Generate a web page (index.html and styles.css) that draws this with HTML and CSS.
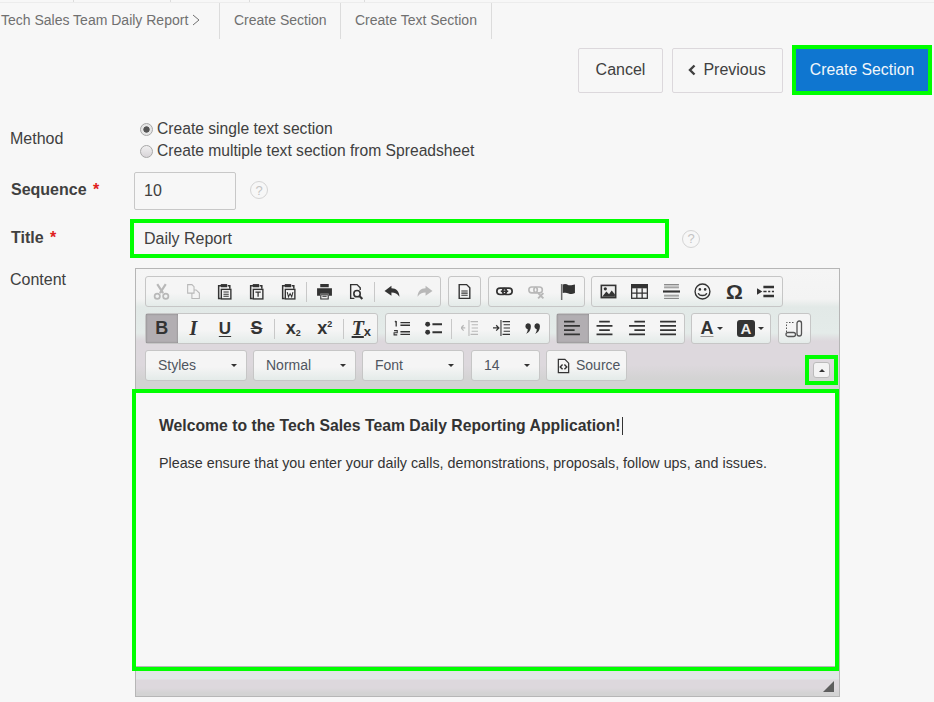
FILE: index.html
```html
<!DOCTYPE html>
<html lang="en">
<head>
<meta charset="utf-8">
<title>Create Text Section</title>
<link rel="stylesheet" href="styles.css">
</head>
<body>
<svg class="sprite" xmlns="http://www.w3.org/2000/svg">
  <symbol id="i-cut" viewBox="0 0 16 16"><path d="M4 1l5.500 8.500M12 1L6.500 9.500" fill="none" stroke="currentColor" stroke-width="2"/><circle cx="4" cy="12.500" r="2.500" fill="none" stroke="currentColor" stroke-width="1.600"/><circle cx="12" cy="12.500" r="2.500" fill="none" stroke="currentColor" stroke-width="1.600"/></symbol>
  <symbol id="i-copy" viewBox="0 0 16 16"><path d="M2.500 1.500h4l2 2v6h-6zM8 6.500h2.500l3 3v5h-7v-5" fill="#f4f4f4" stroke="currentColor"/></symbol>
  <symbol id="i-paste" viewBox="0 0 16 16"><path d="M5 2.500H2.500v12h2" fill="none" stroke="currentColor" stroke-width="1.400"/><path d="M11 2.500h2v3" fill="none" stroke="currentColor" stroke-width="1.400"/><path d="M4.500 1h6v3h-6z" fill="currentColor"/><rect x="5" y="6" width="9" height="9" fill="none" stroke="currentColor" stroke-width="1.300"/><path d="M7 8.500h5M7 10.500h5M7 12.500h5" stroke="currentColor"/></symbol>
  <symbol id="i-pastet" viewBox="0 0 16 16"><path d="M5 2.500H2.500v12h2" fill="none" stroke="currentColor" stroke-width="1.400"/><path d="M11 2.500h2v3" fill="none" stroke="currentColor" stroke-width="1.400"/><path d="M4.500 1h6v3h-6z" fill="currentColor"/><rect x="5" y="6" width="9" height="9" fill="none" stroke="currentColor" stroke-width="1.300"/><path d="M7 8.500h5M9.500 8.500v4.500" stroke="currentColor" stroke-width="1.200"/></symbol>
  <symbol id="i-pastew" viewBox="0 0 16 16"><path d="M5 2.500H2.500v12h2" fill="none" stroke="currentColor" stroke-width="1.400"/><path d="M11 2.500h2v3" fill="none" stroke="currentColor" stroke-width="1.400"/><path d="M4.500 1h6v3h-6z" fill="currentColor"/><rect x="5" y="6" width="9" height="9" fill="none" stroke="currentColor" stroke-width="1.300"/><path d="M6.800 8.500l1.200 4.500 1.500-3 1.500 3 1.200-4.500" fill="none" stroke="currentColor"/></symbol>
  <symbol id="i-print" viewBox="0 0 16 16"><path d="M4 1h8v3H4zM1 5h14v7h-3v-2H4v2H1z" fill="currentColor"/><path d="M4.500 11h7v4h-7z" fill="#eee" stroke="currentColor"/><path d="M6 12.500h4" stroke="currentColor"/></symbol>
  <symbol id="i-preview" viewBox="0 0 16 16"><path d="M6 14.500H2.500v-13h6l3 3v2" fill="none" stroke="currentColor" stroke-width="1.300"/><circle cx="8.500" cy="10" r="3" fill="none" stroke="currentColor" stroke-width="1.500"/><path d="M10.500 12l3 3" stroke="currentColor" stroke-width="2"/></symbol>
  <symbol id="i-undo" viewBox="0 0 16 16"><path d="M7 2.500L0.500 7.500 7 12V9c3.500 0 5.500 1 7.500 4 0-5-3-8-7.500-8z" fill="currentColor"/></symbol>
  <symbol id="i-redo" viewBox="0 0 16 16"><path d="M9 2.500l6.500 5L9 12V9c-3.500 0-5.500 1-7.500 4 0-5 3-8 7.500-8z" fill="currentColor"/></symbol>
  <symbol id="i-doc" viewBox="0 0 16 16"><path d="M3 1.500h7l3 3v10H3z" fill="none" stroke="currentColor" stroke-width="1.300"/><path d="M5 7.500h6M5 9.500h6M5 11.500h6" stroke="currentColor"/></symbol>
  <symbol id="i-link" viewBox="0 0 16 16"><rect x="0.800" y="4.800" width="9" height="6" rx="3" fill="none" stroke="currentColor" stroke-width="1.600"/><rect x="6.200" y="4.800" width="9" height="6" rx="3" fill="none" stroke="currentColor" stroke-width="1.600"/><path d="M4.500 7.800h7" stroke="currentColor" stroke-width="1.500"/></symbol>
  <symbol id="i-unlink" viewBox="0 0 16 16"><rect x="0.800" y="3.800" width="8" height="5.500" rx="2.700" fill="none" stroke="currentColor" stroke-width="1.500"/><rect x="5.500" y="3.800" width="8" height="5.500" rx="2.700" fill="none" stroke="currentColor" stroke-width="1.500"/><path d="M9.500 9.500l5 5M14.500 9.500l-5 5" stroke="currentColor" stroke-width="1.800"/></symbol>
  <symbol id="i-flag" viewBox="0 0 16 16"><path d="M2.500 1v15" stroke="currentColor" stroke-width="1.400" opacity=".7"/><path d="M3.500 1.500c2-1 3.500-.5 5.500.5 2 .5 3.500 0 6-.5v8c-2.500 1-4 1-6 .3-2-.8-3.500-.8-5.500-.3z" fill="currentColor"/></symbol>
  <symbol id="i-image" viewBox="0 0 16 16"><rect x="0.500" y="1.500" width="15" height="13" fill="currentColor"/><rect x="2" y="3" width="12" height="10" fill="#eee"/><circle cx="5" cy="5.500" r="1.500" fill="currentColor"/><path d="M2 13l4-5 2.500 2.500L11 7l3 3.500V13z" fill="currentColor"/></symbol>
  <symbol id="i-table" viewBox="0 0 16 16"><path d="M0 1h16v4H0z" fill="currentColor"/><rect x="0.600" y="1.600" width="14.800" height="12.800" fill="none" stroke="currentColor" stroke-width="1.200"/><path d="M5.500 5v9M10.500 5v9M1 9.500h14" stroke="currentColor" stroke-width="1.200"/></symbol>
  <symbol id="i-hr" viewBox="0 0 16 16"><path d="M0 7h16v2H0z" fill="currentColor"/><path d="M1 1.500h14M1 4.500h14M1 11.500h14M1 14.500h14" stroke="currentColor" opacity=".55"/><path d="M1 3h14M1 13h14" stroke="currentColor" opacity=".35"/></symbol>
  <symbol id="i-smile" viewBox="0 0 16 16"><circle cx="8" cy="8" r="7" fill="none" stroke="currentColor" stroke-width="1.300"/><circle cx="5.500" cy="6" r="1.200" fill="currentColor"/><circle cx="10.500" cy="6" r="1.200" fill="currentColor"/><path d="M4 9.500c1 3 7 3 8 0" fill="none" stroke="currentColor" stroke-width="1.300"/></symbol>
  <symbol id="i-break" viewBox="0 0 16 16"><path d="M0 5l5 3-5 3z" fill="currentColor"/><path d="M6 2.500h10V5H6zM6 11h10v2.500H6z" fill="currentColor"/><path d="M6 8h3M10.500 8h2M14 8h2" stroke="currentColor" stroke-width="1.300"/></symbol>
  <symbol id="i-ol" viewBox="0 0 16 16"><path d="M7 2.500h9M7 5h9M7 11h9M7 13.500h9" stroke="currentColor" stroke-width="1.300" fill="none"/><path d="M3 1v5M1.800 2L3 1" stroke="currentColor" stroke-width="1.200" fill="none"/><path d="M1 10h3v2H1v2h3" stroke="currentColor" fill="none"/></symbol>
  <symbol id="i-ul" viewBox="0 0 16 16"><circle cx="2.500" cy="4" r="2.300" fill="currentColor"/><circle cx="2.500" cy="11.500" r="2.300" fill="currentColor"/><path d="M7 4h9M7 11.500h9" stroke="currentColor" stroke-width="1.800"/></symbol>
  <symbol id="i-outdent" viewBox="0 0 16 16"><path d="M9 1.500h7M10 4.500h6M10 7.500h6M10 10.500h6M9 13.500h7M7.500 0v15" stroke="currentColor" fill="none"/><path d="M0 7.500h4M2.500 5l-2.500 2.500 2.500 2.500" stroke="currentColor" stroke-width="1.200" fill="none"/></symbol>
  <symbol id="i-indent" viewBox="0 0 16 16"><path d="M9 1.500h7M10 4.500h6M10 7.500h6M10 10.500h6M9 13.500h7M7.500 0v15" stroke="currentColor" fill="none"/><path d="M0 7.500h5M3 5l2.500 2.500L3 10" stroke="currentColor" stroke-width="1.200" fill="none"/></symbol>
  <symbol id="i-quote" viewBox="0 0 16 16"><path d="M3.500 3A3 3 0 0 1 6.500 6c0 3.500-2 6-4.500 7 1-1.200 1.500-2.500 1.500-4.200A3 3 0 0 1 3.500 3zM12 3a3 3 0 0 1 3 3c0 3.500-2 6-4.500 7 1-1.200 1.500-2.500 1.500-4.200A3 3 0 0 1 12 3z" fill="currentColor"/></symbol>
  <symbol id="i-left" viewBox="0 0 16 16"><path d="M0 1.500h10M0 5.500h15M0 9.500h10M0 13.500h15" stroke="currentColor" stroke-width="1.800"/></symbol>
  <symbol id="i-center" viewBox="0 0 16 16"><path d="M3 1.500h10M0.500 5.500h15M3 9.500h10M0.500 13.500h15" stroke="currentColor" stroke-width="1.800"/></symbol>
  <symbol id="i-right" viewBox="0 0 16 16"><path d="M6 1.500h10M1 5.500h15M6 9.500h10M1 13.500h15" stroke="currentColor" stroke-width="1.800"/></symbol>
  <symbol id="i-justify" viewBox="0 0 16 16"><path d="M1 1.500h15M1 5.500h15M1 9.500h15M1 13.500h15" stroke="currentColor" stroke-width="1.800"/></symbol>
  <symbol id="i-blocks" viewBox="0 0 18 18"><path d="M1.500 12V2.500h8" fill="none" stroke="currentColor" stroke-dasharray="1.500 1.500"/><rect x="12" y="1" width="4.500" height="15" rx="2.200" fill="none" stroke="currentColor" stroke-width="1.300"/><rect x="1" y="12.500" width="9.500" height="4" rx="2" fill="none" stroke="currentColor" stroke-width="1.300"/></symbol>
  <symbol id="i-source" viewBox="0 0 16 16"><path d="M2.500 1h7l4 4v10h-11z" fill="none" stroke="currentColor" stroke-width="1.300"/><path d="M7 6.500L4.500 9 7 11.500M9 6.500L11.500 9 9 11.500" fill="none" stroke="currentColor" stroke-width="1.500"/></symbol>
</svg>

<div class="topstrip"><span class="ts ts-1"></span><span class="ts ts-2"></span><span class="ts ts-3"></span><span class="ts ts-4"></span></div>

<nav class="crumbs">
  <div class="crumb crumb-first">Tech Sales Team Daily Report <svg class="crumb-chev" viewBox="0 0 8 12"><path d="M1 1l6 5-6 5" fill="none" stroke="currentColor"/></svg></div>
  <div class="crumb">Create Section</div>
  <div class="crumb">Create Text Section</div>
</nav>

<div class="actions">
  <button class="btn">Cancel</button>
  <button class="btn btn-prev"><svg class="prev-chev" viewBox="0 0 8 12"><path d="M6.500 1.500L2 6l4.500 4.500" fill="none" stroke="currentColor" stroke-width="2.400"/></svg>Previous</button>
  <button class="btn btn-primary">Create Section</button>
</div>

<form class="form">
  <div class="row row-method">
    <div class="label">Method</div>
    <div class="radios">
      <div class="radio-line"><span class="radio radio-on"></span>Create single text section</div>
      <div class="radio-line"><span class="radio"></span>Create multiple text section from Spreadsheet</div>
    </div>
  </div>
  <div class="row row-seq">
    <div class="label label-req">Sequence <span class="req">*</span></div>
    <div class="input input-seq">10</div>
    <span class="help">?</span>
  </div>
  <div class="row row-title">
    <div class="label label-req">Title <span class="req">*</span></div>
    <div class="input input-title">Daily Report</div>
    <span class="help">?</span>
  </div>
  <div class="row row-content">
    <div class="label">Content</div>
    <div class="editor">
      <div class="toolbar">
        <div class="tb-row">
          <div class="grp">
            <span class="tb off"><svg><use href="#i-cut"/></svg></span>
            <span class="tb off"><svg><use href="#i-copy"/></svg></span>
            <span class="tb"><svg><use href="#i-paste"/></svg></span>
            <span class="tb"><svg><use href="#i-pastet"/></svg></span>
            <span class="tb"><svg><use href="#i-pastew"/></svg></span>
            <span class="sep"></span>
            <span class="tb"><svg><use href="#i-print"/></svg></span>
            <span class="tb"><svg><use href="#i-preview"/></svg></span>
            <span class="sep"></span>
            <span class="tb"><svg><use href="#i-undo"/></svg></span>
            <span class="tb off"><svg><use href="#i-redo"/></svg></span>
          </div>
          <div class="grp"><span class="tb"><svg><use href="#i-doc"/></svg></span></div>
          <div class="grp">
            <span class="tb"><svg><use href="#i-link"/></svg></span>
            <span class="tb off"><svg><use href="#i-unlink"/></svg></span>
            <span class="tb"><svg><use href="#i-flag"/></svg></span>
          </div>
          <div class="grp">
            <span class="tb"><svg><use href="#i-image"/></svg></span>
            <span class="tb"><svg><use href="#i-table"/></svg></span>
            <span class="tb"><svg><use href="#i-hr"/></svg></span>
            <span class="tb"><svg><use href="#i-smile"/></svg></span>
            <span class="tb glyph-omega">Ω</span>
            <span class="tb"><svg><use href="#i-break"/></svg></span>
          </div>
        </div>
        <div class="tb-row">
          <div class="grp">
            <span class="tb on glyph-b">B</span>
            <span class="tb glyph-i">I</span>
            <span class="tb glyph-u">U</span>
            <span class="tb glyph-s">S</span>
            <span class="sep"></span>
            <span class="tb glyph-x">x<span class="g-sub">2</span></span>
            <span class="tb glyph-x">x<span class="g-sup">2</span></span>
            <span class="sep"></span>
            <span class="tb glyph-tx"><span class="g-t">T</span><span class="g-xs">x</span></span>
          </div>
          <div class="grp">
            <span class="tb"><svg><use href="#i-ol"/></svg></span>
            <span class="tb"><svg><use href="#i-ul"/></svg></span>
            <span class="sep"></span>
            <span class="tb off"><svg><use href="#i-outdent"/></svg></span>
            <span class="tb"><svg><use href="#i-indent"/></svg></span>
            <span class="tb"><svg><use href="#i-quote"/></svg></span>
          </div>
          <div class="grp">
            <span class="tb on"><svg><use href="#i-left"/></svg></span>
            <span class="tb"><svg><use href="#i-center"/></svg></span>
            <span class="tb"><svg><use href="#i-right"/></svg></span>
            <span class="tb"><svg><use href="#i-justify"/></svg></span>
          </div>
          <div class="grp">
            <span class="tb tb-color"><span class="g-a">A</span><span class="caret"></span></span>
            <span class="tb tb-color"><span class="g-abg">A</span><span class="caret"></span></span>
          </div>
          <div class="grp"><span class="tb tb-blocks"><svg><use href="#i-blocks"/></svg></span></div>
        </div>
        <div class="tb-row tb-row-last">
          <div class="combo combo-styles">Styles<span class="caret"></span></div>
          <div class="combo combo-normal">Normal<span class="caret"></span></div>
          <div class="combo combo-font">Font<span class="caret"></span></div>
          <div class="combo combo-size">14<span class="caret"></span></div>
          <div class="grp btn-source"><svg><use href="#i-source"/></svg>Source</div>
          <div class="collapse-wrap"><span class="collapse"><span class="caret caret-up"></span></span></div>
        </div>
      </div>
      <div class="content">
        <p class="content-h">Welcome to the Tech Sales Team Daily Reporting Application!<span class="cursor"></span></p>
        <p class="content-p">Please ensure that you enter your daily calls, demonstrations, proposals, follow ups, and issues.</p>
      </div>
      <div class="resize-bar"><span class="grip"></span></div>
    </div>
  </div>
</form>
</body>
</html>
```
FILE: styles.css
```css
* { box-sizing: border-box; }
html, body { margin: 0; padding: 0; }
body {
  width: 934px;
  height: 702px;
  overflow: hidden;
  background: #f7f7f7;
  color: #404040;
  font-family: "Liberation Sans", Arial, sans-serif;
  font-size: 16px;
}
.sprite { display: none; }

/* remains of the header above */
.topstrip {
  display: flex;
  height: 3px;
  border-bottom: 1px solid #ececec;
}
.ts { display: block; height: 2px; border-right: 1px solid #dcdcdc; }
.ts-1 { width: 74px; }
.ts-2 { width: 97px; }
.ts-3 { width: 79px; }
.ts-4 { width: 115px; }

/* breadcrumbs */
.crumbs {
  display: flex;
  height: 36px;
  color: #707070;
  font-size: 14px;
}
.crumb {
  display: flex;
  align-items: center;
  padding: 0 14px;
  border-right: 1px solid #dcdcdc;
  white-space: nowrap;
  height: 36px;
  padding-bottom: 2px;
}
.crumb-first { padding-left: 1px; padding-right: 0; width: 220px; gap: 4px; }
.crumb:nth-child(2) { width: 121px; }
.crumb:nth-child(3) { width: 151px; }
.crumb-chev { width: 8px; height: 12px; }

/* actions */
.actions {
  display: flex;
  justify-content: flex-end;
  align-items: center;
  gap: 9px;
  height: 50px;
  margin-top: 6px;
  padding-right: 2px;
}
.btn {
  height: 45px;
  font: inherit;
  color: #404040;
  background: #f7f7f7;
  border: 1px solid #dcd8dc;
  border-radius: 2px;
  padding: 0;
  width: 85px;
}
.btn-prev {
  width: 111px;
  display: flex;
  align-items: center;
  justify-content: center;
  gap: 7px;
}
.prev-chev { width: 8px; height: 12px; margin-left: -1px; }
.btn-primary {
  width: 140px;
  height: 50px;
  font-size: 15.800px;
  background: #0f76d0;
  color: #f2f7fb;
  border: 4px solid #00ff00;
  border-radius: 0;
}

/* form */
.form { display: block; }
.row { display: flex; }
.label { width: 134px; padding-left: 10px; flex: none; }
.label-req { padding-left: 11px; font-weight: 700; }
.req { color: #e02020; font-weight: 700; margin-left: 2px; }
.row-method { margin-top: 24px; height: 44px; }
.row-method .label { padding-top: 11px; }
.radios { padding-left: 6px; margin-top: -1px; font-size: 15.650px; }
.radio-line { display: flex; align-items: center; height: 22px; gap: 4px; }
.radio {
  width: 13px;
  height: 13px;
  border-radius: 50%;
  border: 1px solid #a8a8a8;
  background: linear-gradient(#f0f0f0, #d8d4d8);
}
.radio-on { background: radial-gradient(circle, #555 0 2.800px, #e6e6e6 3.500px); }

.input {
  display: flex;
  align-items: center;
  color: #404040;
}
.row-seq { margin-top: 9px; height: 38px; align-items: center; }
.row-seq .label { padding-bottom: 2px; }
.input-seq {
  width: 102px;
  height: 38px;
  border: 1px solid #c8c8c8;
  border-radius: 2px;
  padding-left: 9px;
}
.help {
  width: 18px;
  height: 18px;
  border-radius: 50%;
  border: 1px solid #d4d4d4;
  color: #c4c4c4;
  font-size: 13px;
  display: flex;
  align-items: center;
  justify-content: center;
  margin-left: 14px;
}
.row-seq .help { margin-bottom: 2px; }
.row-title { margin-top: 9px; height: 39px; align-items: center; }
.row-title .label { width: 130px; padding-bottom: 1px; }
.row-title .help { margin-left: 13px; }
.input-title {
  width: 539px;
  height: 39px;
  border: 4px solid #00ff00;
  padding-left: 10px;
}
.row-content { margin-top: 10px; }
.row-content .label { padding-top: 3px; width: 135px; }

/* editor */
.editor {
  width: 705px;
  height: 429px;
  border: 1px solid #b6b6b6;
  display: flex;
  flex-direction: column;
  position: relative;
}
.toolbar {
  height: 120px;
  padding: 7px 0 0 9px;
  background: linear-gradient(#f5f5f5 0, #f3f3f3 30px, #e2e9e7 38px, #e4ebe9 64px, #ddd8dd 72px, #ddd8dd 96px, #d3d3d3 110px);
}
.tb-row { display: flex; gap: 6.500px; height: 31px; margin-bottom: 6px; }
.tb-row-last { gap: 6px; align-items: stretch; position: relative; }
.grp {
  display: flex;
  align-items: center;
  height: 31px;
  border: 1px solid #c6c6c6;
  border-radius: 3px;
  background: linear-gradient(#f5f5f5 55%, #e4ebe9);
}
.tb {
  width: 31.600px;
  height: 29px;
  display: flex;
  align-items: center;
  justify-content: center;
  color: #333;
  flex: none;
}
.tb svg { width: 17px; height: 17px; }
.tb.off { color: #b8b8b8; }
.tb.on {
  background: #b2aeb2;
  box-shadow: inset 0 0 2px #777;
}
.sep {
  width: 1px;
  height: 20px;
  background: #c8c8c8;
  flex: none;
  margin: 0 2px;
}
.glyph-b { font-weight: 700; font-size: 18px; }
.glyph-i { font: italic 700 20px "Liberation Serif", serif; }
.glyph-u { font-weight: 700; font-size: 17px; text-decoration: underline; text-underline-offset: 2px; }
.glyph-s { font-weight: 700; font-size: 18px; text-decoration: line-through; }
.glyph-x { font-weight: 700; font-size: 18px; align-items: center; }
.g-sub { font-size: 9px; align-self: flex-end; margin-bottom: 5px; }
.g-sup { font-size: 9px; align-self: flex-start; margin-top: 5px; }
.glyph-tx { font-weight: 700; }
.g-t { font: italic 700 20px "Liberation Serif", serif; text-decoration: underline; }
.g-xs { font-size: 13px; align-self: flex-end; margin-bottom: 4px; }
.glyph-omega { font-weight: 700; font-size: 21px; }
.tb-color { width: 39px; gap: 3px; }
.g-a { font-weight: 700; font-size: 18px; text-decoration: underline; text-decoration-color: #999; text-underline-offset: 2px; }
.g-abg {
  font-weight: 700;
  font-size: 15px;
  width: 18px;
  height: 17px;
  line-height: 17px;
  text-align: center;
  background: #333;
  color: #eee;
  border-radius: 3px;
}
.caret {
  width: 0;
  height: 0;
  border-left: 3px solid transparent;
  border-right: 3px solid transparent;
  border-top: 3px solid #333;
}
.caret-up { border-top: 0; border-bottom: 3px solid #333; }
.tb-blocks svg { width: 18px; height: 18px; }
.tb-blocks { color: #555; }
.combo {
  display: flex;
  align-items: center;
  justify-content: space-between;
  height: 31px;
  padding: 0 9px 2px 12px;
  border: 1px solid #c6c6c6;
  border-radius: 3px;
  background: linear-gradient(#f5f5f5 55%, #e4ebe9);
  font-size: 14px;
  color: #4f5560;
}
.combo .caret { margin-top: 2px; }
.combo-styles { width: 102px; }
.combo-normal { width: 103px; }
.combo-font { width: 102px; }
.combo-size { width: 69px; margin-left: 1px; }
.btn-source {
  width: 81px;
  padding: 0 0 2px 9px;
  gap: 5px;
  font-size: 14px;
  color: #4f5560;
}
.btn-source svg { width: 15px; height: 16px; color: #333; margin-top: 2px; }
.collapse-wrap {
  position: absolute;
  left: 660px;
  top: 5px;
  width: 33px;
  height: 30px;
  border: 4px solid #00ff00;
  display: flex;
  align-items: center;
  justify-content: center;
}
.collapse {
  width: 17px;
  height: 16px;
  border: 1px solid #bbb;
  border-radius: 3px;
  background: #f3f3f3;
  display: flex;
  align-items: center;
  justify-content: center;
}

/* content */
.content {
  position: relative;
  margin: 0 -2px 0 -4px;
  width: 707px;
  height: 282px;
  background: #f7f7f7;
  border: 4px solid #00ff00;
  padding: 0 0 0 23px;
  color: #333;
  box-shadow: inset 0 -1px #b6b6b6;
  flex: none;
}
.content-h {
  margin: 21px 0 0;
  font-weight: 700;
  font-size: 15.750px;
  line-height: 24px;
  display: flex;
  align-items: center;
}
.cursor { width: 1px; height: 18px; background: #333; margin-left: 1px; }
.content-p {
  margin: 15px 0 0;
  font-size: 14.300px;
  line-height: 20px;
}
.resize-bar {
  flex: 1;
  position: relative;
  background: linear-gradient(#e0e7e6 0 8px, #ddd8dd 9px 17px, #d3d3d3 22px);
}
.grip {
  position: absolute;
  right: 5px;
  bottom: 4px;
  width: 11px;
  height: 11px;
  background: #5e5e5e;
  clip-path: polygon(100% 0, 100% 100%, 0 100%);
}
```
